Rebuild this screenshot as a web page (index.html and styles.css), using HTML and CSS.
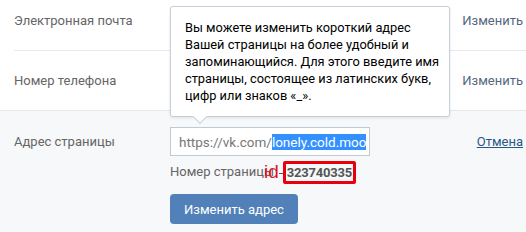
FILE: index.html
```html
<!DOCTYPE html>
<html lang="ru">
<head>
<meta charset="utf-8">
<link rel="stylesheet" href="styles.css">
</head>
<body>
<div class="page">
  <div class="row row-first">
    <div class="label">Электронная почта</div>
    <div class="content"></div>
    <a class="action">Изменить</a>
  </div>
  <div class="row row-second">
    <div class="label">Номер телефона</div>
    <div class="content"></div>
    <a class="action">Изменить</a>
  </div>
  <div class="row row-edit">
    <div class="label label-edit">Адрес страницы</div>
    <div class="content">
      <div class="input"><span class="prefix">https://vk.com/</span><span class="sel">lonely.cold.moo</span></div>
      <div class="pageid"><span class="pid-label">Номер страницы</span><span class="mark">id</span><span class="dash"></span><span class="idbox">323740335</span></div>
      <button class="btn">Изменить адрес</button>
    </div>
    <a class="cancel">Отмена</a>
  </div>
  <div class="tooltip">Вы можете изменить короткий адрес<br>Вашей страницы на более удобный и<br>запоминающийся. Для этого введите имя<br>страницы, состоящее из латинских букв,<br>цифр или знаков «_».</div>
</div>
</body>
</html>
```
FILE: styles.css
```css
html, body {
  margin: 0;
  padding: 0;
  background: #ffffff;
}
.page {
  position: relative;
  width: 526px;
  height: 232px;
  overflow: hidden;
  font-family: Roboto, "Liberation Sans", sans-serif;
  font-size: 13px;
  color: #000;
}
.row {
  display: flex;
  align-items: flex-start;
}
.label {
  width: 156px;
  padding-left: 14px;
  color: #656565;
  line-height: 16px;
  flex: none;
}
.content {
  flex: 1;
}
.action {
  color: #55677d;
  line-height: 16px;
  padding-right: 3px;
}
.row-first {
  height: 51px;
  margin-left: 14px;
  border-bottom: 1px solid #e7e8ec;
  padding-top: 13px;
  box-sizing: border-box;
}
.row-first .label {
  width: 142px;
  padding-left: 0;
}
.row-second {
  height: 60px;
  border-bottom: 1px solid #e7e8ec;
  padding-top: 22px;
  box-sizing: border-box;
}
.row-edit {
  background: #f7f8fa;
  height: 121px;
  padding-top: 16px;
  box-sizing: border-box;
}
.label-edit {
  padding-top: 7px;
}
.input {
  width: 200px;
  height: 29px;
  box-sizing: border-box;
  border: 1px solid #c0cad5;
  background: #fff;
  padding: 6px 0 0 8px;
  line-height: 16px;
  white-space: nowrap;
  overflow: hidden;
  font-size: 13.5px;
}
.prefix {
  color: #777;
}
.sel {
  background: #3390ff;
  color: #fff;
}
.pageid {
  display: flex;
  align-items: center;
  height: 26px;
  margin-top: 3px;
  color: #656565;
}
.pid-label {
  line-height: 16px;
}
.mark {
  color: #e0141e;
  font-size: 19px;
  line-height: 20px;
  margin-left: -10px;
  font-family: "Liberation Sans", Arial, sans-serif;
}
.dash {
  width: 4px;
  height: 1px;
  background: #555;
  margin-top: 2px;
}
.idbox {
  border: 3px solid #e8000b;
  border-radius: 2px;
  padding: 0 1px;
  height: 23px;
  box-sizing: border-box;
  line-height: 17px;
  font-weight: bold;
  color: #555;
  font-size: 13px;
  letter-spacing: -0.2px;
}
.btn {
  display: block;
  margin-top: 9px;
  width: 128px;
  height: 30px;
  border: 0;
  border-radius: 4px;
  background: #5181b8;
  color: #fff;
  font-family: Roboto, "Liberation Sans", sans-serif;
  font-size: 13px;
  padding: 0;
}
.cancel {
  color: #2a5885;
  text-decoration: underline;
  line-height: 16px;
  padding-top: 7px;
  padding-right: 3px;
}
.tooltip {
  position: absolute;
  left: 170px;
  top: 6px;
  width: 280px;
  height: 111px;
  box-sizing: border-box;
  padding: 12px 14px 0 14px;
  background: #fff;
  border: 1px solid #c5d0db;
  border-radius: 3px;
  box-shadow: 0 1px 3px rgba(0,0,0,0.1);
  line-height: 17px;
  white-space: nowrap;
  color: #000;
  font-size: 12.8px;
}
.tooltip::after {
  content: "";
  position: absolute;
  left: 24px;
  bottom: -6px;
  width: 9px;
  height: 9px;
  background: #fff;
  border-right: 1px solid #c5d0db;
  border-bottom: 1px solid #c5d0db;
  transform: rotate(45deg);
}
```
